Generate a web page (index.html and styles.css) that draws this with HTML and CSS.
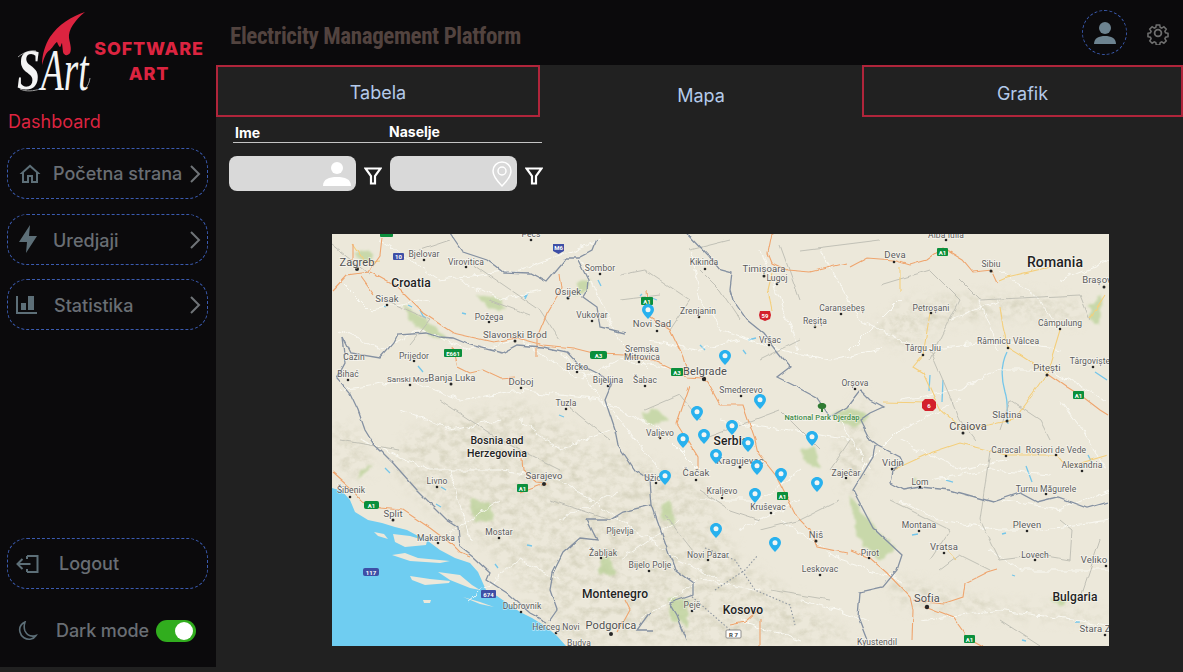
FILE: index.html
```html
<!DOCTYPE html>
<html lang="sr">
<head>
<meta charset="utf-8">
<title>Electricity Management Platform</title>
<link rel="stylesheet" href="styles.css">
</head>
<body>
<div class="app">
  <aside class="sidebar">
    <div class="brand">
      <svg class="brand-mark" viewBox="0 0 92 105" width="92" height="105" aria-label="SArt">
        <path class="flame" d="M85 12C72 16 58 25 50 37C45 45 42 55 42 65C44 58 46 52 50 50C53 47 55 43 57 42C58 44 59 47 60 47C61 47 61 44 62 43L63 52C64 56 68 56 70 53C72 49 70 44 69 38C68 30 75 20 85 12Z"/>
        <path class="swoosh" d="M18 57C24 52 31 50 36 51M20 89C26 92 34 91 40 89M90 78C89 84 87 87 84 90"/>
        <text class="logo-s" transform="translate(17 89) scale(.75 1)">S</text>
        <text class="logo-art" transform="translate(41 90) scale(.62 1)">Art</text>
      </svg>
      <div class="brand-name">SOFTWARE<br>ART</div>
    </div>
    <div class="section-title">Dashboard</div>
    <nav class="nav">
      <a class="nav-item">
        <svg class="nav-icon" viewBox="0 0 24 24"><path d="M12 5.200l6 5.400V19h-3v-6H9v6H6v-8.400l6-5.400M12 2.500L1.500 12H4v9h7v-6h2v6h7v-9h2.500L12 2.500z"/></svg>
        <span class="nav-label">Početna strana</span>
        <svg class="chev" viewBox="0 0 12 20"><path d="M2 2l8 8-8 8"/></svg>
      </a>
      <a class="nav-item">
        <svg class="nav-icon bolt" viewBox="0 0 18 28"><path d="M11 0L0 17h8L7 28 18 11H10z"/></svg>
        <span class="nav-label low">Uredjaji</span>
        <svg class="chev" viewBox="0 0 12 20"><path d="M2 2l8 8-8 8"/></svg>
      </a>
      <a class="nav-item">
        <svg class="nav-icon wide" viewBox="0 0 21 18"><path d="M0 0h2v16h19v2H0zM5 7h5v7H5zM12 0h6v14h-6z"/></svg>
        <span class="nav-label low">Statistika</span>
        <svg class="chev" viewBox="0 0 12 20"><path d="M2 2l8 8-8 8"/></svg>
      </a>
    </nav>
    <div class="side-bottom">
      <a class="nav-item logout">
        <svg class="nav-icon wide" viewBox="0 0 23 18"><path class="line" d="M11 1h10.500v16H11M11 1v3M11 17v-3M1.500 9h13M6.500 4l-5 5 5 5"/></svg>
        <span class="nav-label">Logout</span>
      </a>
      <div class="mode-row">
        <svg class="moon" viewBox="0 0 20 20"><path d="M7 1C3 3 1 7 2 11c1 5 6 8 11 7 2-.4 4-2 5-3.500-5 1.500-9-.5-11-4.500C6 7.500 6 4 7 1z"/></svg>
        <span class="mode-label">Dark mode</span>
        <span class="toggle"><span class="knob"></span></span>
      </div>
    </div>
  </aside>

  <div class="main">
    <header class="topbar">
      <h1 class="title">Electricity Management Platform</h1>
      <div class="top-actions">
        <span class="avatar">
          <svg viewBox="0 0 24 24" width="24" height="24"><circle cx="12" cy="7" r="6"/><path d="M1 23c0-6 5-8 11-8s11 2 11 8z"/></svg>
        </span>
        <svg class="gear" viewBox="0 0 24 24" width="24" height="24"><circle cx="12" cy="12" r="3.400"/><path d="M10 2.500h4l.6 2.900 1.800.8 2.500-1.600 2.800 2.800-1.600 2.500.8 1.800 2.900.6v4l-2.900.6-.8 1.800 1.600 2.500-2.800 2.800-2.500-1.600-1.800.8-.6 2.900h-4l-.6-2.900-1.800-.8-2.500 1.600-2.800-2.800 1.600-2.500-.8-1.800-2.900-.6v-4l2.900-.6.8-1.800-1.600-2.500 2.800-2.800 2.500 1.600 1.800-.8z" transform="translate(1.800 1.800) scale(.85)"/></svg>
      </div>
    </header>

    <div class="tabs">
      <div class="tab tab-boxed tab-first">Tabela</div>
      <div class="tab tab-active">Mapa</div>
      <div class="tab tab-boxed tab-last">Grafik</div>
    </div>

    <section class="filters">
      <div class="filter-head">
        <span class="col-name">Ime</span>
        <span class="col-place">Naselje</span>
      </div>
      <div class="filter-row">
        <div class="field">
          <svg viewBox="0 0 28 24" width="28" height="24"><circle cx="14" cy="6" r="6"/><path d="M0 24c0-7 6-9 14-9s14 2 14 9z"/></svg>
        </div>
        <svg class="funnel" viewBox="0 0 18 18" width="18" height="18"><path d="M1.500 1.500h15L11 9v7.500H7V9z"/></svg>
        <div class="field">
          <svg class="pin-outline" viewBox="0 0 20 26" width="20" height="26"><path d="M10 1C5 1 1 5 1 10c0 6 9 15 9 15s9-9 9-15c0-5-4-9-9-9z"/><circle cx="10" cy="10" r="4"/></svg>
        </div>
        <svg class="funnel" viewBox="0 0 18 18" width="18" height="18"><path d="M1.500 1.500h15L11 9v7.500H7V9z"/></svg>
      </div>
    </section>

    <div class="map-wrap">
      <svg class="map" viewBox="332 234 777 412" width="777" height="412">
        <defs>
          <filter id="blur3" x="-20%" y="-20%" width="140%" height="140%"><feGaussianBlur stdDeviation="7"/></filter>
          <filter id="wiggle" filterUnits="userSpaceOnUse" x="320" y="220" width="800" height="440">
            <feTurbulence type="fractalNoise" baseFrequency="0.09" numOctaves="3" seed="3" result="n"/>
            <feDisplacementMap in="SourceGraphic" in2="n" scale="9" xChannelSelector="R" yChannelSelector="G"/>
          </filter>
          <filter id="wiggle-soft" filterUnits="userSpaceOnUse" x="320" y="220" width="800" height="440">
            <feTurbulence type="fractalNoise" baseFrequency="0.07" numOctaves="2" seed="9" result="n"/>
            <feDisplacementMap in="SourceGraphic" in2="n" scale="4" xChannelSelector="R" yChannelSelector="G" result="d"/>
            <feGaussianBlur in="d" stdDeviation=".35"/>
          </filter>
          <filter id="parkedge" filterUnits="userSpaceOnUse" x="320" y="220" width="800" height="440">
            <feTurbulence type="fractalNoise" baseFrequency="0.12" numOctaves="3" seed="5" result="n"/>
            <feDisplacementMap in="SourceGraphic" in2="n" scale="7" xChannelSelector="R" yChannelSelector="G" result="d"/>
            <feGaussianBlur in="d" stdDeviation=".8"/>
          </filter>
          <filter id="hills" x="0" y="0" width="100%" height="100%">
            <feTurbulence type="fractalNoise" baseFrequency="0.1 0.13" numOctaves="4" seed="7"/>
            <feColorMatrix type="matrix" values="0 0 0 0 .62  0 0 0 0 .60  0 0 0 0 .46  1.500 1.500 0 0 -1.250"/>
          </filter>
          <mask id="mountains">
            <g fill="#fff" filter="url(#blur3)">
              <path d="M410 430L520 400 600 445 700 480 740 560 800 600 860 640 560 646 500 560 430 510 390 470z"/>
              <path d="M870 330L905 300 960 295 1040 295 1085 305 1080 322 1010 318 950 322 900 350z"/>
              <path d="M332 420L360 430 375 470 340 480z"/>
              <path d="M885 575L950 590 1000 603 1109 612 1109 622 1000 616 940 610 895 606z"/>
              <path d="M862 390L872 470 850 505 835 450z"/>
            </g>
          </mask>
          <symbol id="pin" viewBox="0 0 12 15">
            <path class="pin-body" d="M6 0C2.700 0 0 2.600 0 5.800 0 9.500 6 15 6 15s6-5.500 6-9.200C12 2.600 9.300 0 6 0z"/>
            <circle class="pin-hole" cx="6" cy="5.800" r="2.500"/>
          </symbol>
        </defs>

        <rect class="land" x="332" y="234" width="777" height="412"/>
        <rect x="332" y="234" width="777" height="412" filter="url(#hills)" mask="url(#mountains)" opacity=".7"/>

        <g class="park" filter="url(#parkedge)">
          <path d="M476 294L500 299 506 310 488 308z"/>
          <path d="M402 304L425 318 447 340 430 336 410 320z"/>
          <path d="M352 255L364 250 374 256 366 262z"/>
          <path d="M578 283L590 278 588 292 575 296z"/>
          <path d="M470 497L490 505 495 520 475 522 472 510z"/>
          <path d="M360 470L372 465 358 482z"/>
          <path d="M600 560L610 555 615 575 600 575z"/>
          <path d="M830 415L852 408 870 416 855 428z"/>
          <path d="M800 450L815 448 822 470 806 462z"/>
          <path d="M850 495L868 520 896 548 880 562 856 535z"/>
          <path d="M668 597L690 600 688 625 670 620z"/>
          <path d="M1090 305L1102 295 1100 325 1090 320z"/>
          <path d="M640 412L655 410 670 420 650 425z"/>
          <path d="M660 505L672 500 675 525 662 520z"/>
          <path d="M1050 598L1070 600 1060 606z"/>
          <path d="M912 478L916 478 914 486z"/>
        </g>

        <path class="sea" d="M332 488L342 491 350 500 355 512 368 520 382 523 395 527 407 530 418 536 428 541 440 550 455 558 470 563 478 572 486 590 497 596 507 603 520 612 532 618 545 626 557 636 566 646H332z"/>
        <g class="isle">
          <path d="M374 532L384 534 388 539 378 536z"/>
          <path d="M393 534L410 536 427 541 426 545 405 547 395 542z"/>
          <path d="M392 555L405 553 418 558 450 561 440 563 410 561z"/>
          <path d="M410 576L430 579 450 581 449 583 425 585 412 580z"/>
          <path d="M438 572L460 575 472 585 480 590 470 588 450 580z"/>
          <path d="M463 597L480 602 494 607 480 604z"/>
          <path d="M423 600L431 600 430 603 424 603z"/>
        </g>

        <g class="water-in">
          <path d="M420 310l3 6 3 2M408 305l4 2M383 306l3 1M462 313l4 1M524 297l3-2-2 4M559 415l5 2M418 366l5 6M441 487l5 3M436 504l5 3M385 468l5 5M495 564l3 4M527 545l5 1M598 280l3 6M652 298l5 2M700 345l5 5M743 350l3 4M640 296l2-2M1007 352c-6 12-6 26 -2 40 4 12 1 20 3 32M1095 372l12 8M930 375l-1 16M943 380l-1 22M1026 466l6 16M1088 455l4 8M912 535l6-1M1002 534l4-1M1012 575l3 1M1075 622l5 0M1022 640l4 1M946 480l7 2M748 340l8-2"/>
        </g>
        <g class="minor" filter="url(#wiggle)">
          <path d="M340 330L380 350 420 330 470 350 520 340 580 380 620 360 680 370M340 390L410 380 460 400 520 390 600 400 660 430 700 470M360 440L430 470 500 470 560 480 620 520 680 560 720 580M450 470L470 540M580 260L600 300 620 340 650 370M690 250L700 300 720 330 780 350 830 360 880 350M760 250L780 300 800 350M820 250L860 320 920 350 1000 340 1060 350M900 400L960 390 1000 370 1050 370 1105 400M900 440L960 470 1010 460M900 500L940 520 1000 530 1040 530 1109 520M990 550L1020 570 1109 570M840 420L870 470M780 520L840 560 900 580M640 620L700 580 760 590M920 620L1000 610 1109 625M380 240L440 280 520 270 600 240M340 280L370 310 430 300M560 350L620 420 660 470M1000 270L1040 300 1060 330M980 300L1000 350M1060 400L1090 440 1105 470M460 280L500 300 540 290M400 410L450 430 500 420M520 420L560 450 610 430M650 340L700 350 740 340M720 420L790 430 850 440M700 500L760 500 800 470M740 530L800 500M620 560L680 520M560 520L620 490M440 540L500 500M470 600L520 560 560 580M930 480L990 470 1050 475M1000 500L1060 510 1109 490M860 470L900 430 960 400M950 320L1000 300M1060 280L1109 260M850 350L900 300M800 600L870 620M740 620L800 640"/>
        </g>
        <g class="subborder" filter="url(#wiggle-soft)">
          <path d="M332 245L370 275M420 250L450 240M470 262L540 310 560 340M385 300L430 320 410 345M490 300L530 315M620 275L645 270 690 300 670 330M700 270L720 290 740 320M780 245L800 300M800 250L880 240M880 285L930 270 960 300 930 360M980 300L1080 295 1090 320M960 280L980 300M1000 430L1010 400 1040 420 1050 440M930 350L960 420 975 440M990 450L980 520 1000 560 1040 555 1070 560 1072 530 1060 520M1100 540L1080 600M940 570L960 555 990 570M700 490L730 510 760 520M665 515L700 560M700 440L780 410 820 450M840 500L800 520 760 530M440 400L500 440 560 470M560 400L610 440M550 500L610 520M340 440L400 450M890 500L950 530 930 560M1000 620L1040 646M645 410L680 395 700 420M620 300L660 295M690 250L730 240M760 360L800 340M830 470L850 440M770 590L830 600"/>
        </g>
        <g class="yellow" filter="url(#wiggle-soft)">
          <path d="M1000 280L1007 277 1050 267M1000 307L1003 327 1008 348 1023 357 1047 373 1060 330M1047 373L1033 393 1013 420 963 430 940 410 923 373 913 367 923 355 930 313M900 292L900 267M928 403L883 402M893 470L930 453 960 443 1007 455 1057 455 1067 467 1108 455M772 273L768 290 772 310M945 548L956 560M1105 295L1090 318M352 243L365 262 380 260"/>
        </g>
        <g class="highway" filter="url(#wiggle-soft)">
          <path d="M333 290L347 275 368 272 380 255 382 237M353 243L353 260M360 277L373 295M370 272L397 287 423 313 453 333 493 342 517 338 543 345 573 348 597 354 625 355 657 362 688 377 702 378 708 383 720 405 743 405 755 440 758 453 777 477 787 497 797 517 810 530 817 547 847 553M647 290L650 317 670 330 683 357 688 375M677 423L690 385M677 423L698 457 698 470M560 273L562 288 547 313 537 337 537 357M453 347L458 367 470 373 483 370 500 378 515 377M332 472L350 488 363 502 380 508 403 510 430 528 450 543 460 553 470 557M522 458L523 470 537 482 547 483 520 493M850 267L867 258 893 260 910 265 927 260 943 248 963 260 973 272 992 270 998 283M772 233L768 253 772 263 787 270 810 272 847 263M1047 373L1067 387 1083 397 1100 410 1108 415M850 550L870 558 887 573 910 597 913 610 912 640M913 600L945 603 963 597 965 583 987 572 997 569M925 606L953 617 967 637 983 646M625 600L630 610 618 632M730 625L745 622 758 610M760 620L760 646"/>
        </g>
        <g class="border" filter="url(#wiggle-soft)">
          <path d="M450 233L463 252 487 260 503 272 530 273 547 282 563 263 567 258 578 258 593 250 597 240M578 260L588 280 587 290 583 297 597 307 600 327 625 333"/>
          <path d="M342 337L350 353 380 358 393 343 397 335 427 333 440 337 453 338 470 345 502 353 517 345 543 347 567 352 577 363 597 373 612 383 605 400 615 430 618 445 635 470 650 480 652 505 623 512 610 520 587 520"/>
          <path d="M342 337L345 363 337 378 350 393 358 410 365 430 373 443 393 463 417 490 447 520 458 527 460 547 473 557 490 573 487 580 507 593 530 613 547 622"/>
          <path d="M587 520L597 540 580 538 563 553 553 573 550 590 557 610 550 620M652 505L675 570 693 583 693 595 670 603 677 615 687 640M650 612L637 630 653 630"/>
          <path d="M687 233L708 255 720 270 732 273 730 290 733 300 747 320 763 333 790 367 777 377 793 385 817 398 830 417 847 407 860 390 870 400 883 407 870 413 860 420 870 440 877 445 900 457 903 463 892 470 890 483 903 490 920 487 950 490 993 502 1020 493 1037 502 1057 497 1087 508 1108 502"/>
          <path d="M875 445L873 457 853 490 873 528 902 555 897 570 883 587 860 592 858 617 867 640"/>
        </g>
        <path class="dotted" d="M705 548L735 560 755 590 790 605 795 625M730 630L690 595M715 590L745 570 758 555"/>

        <g class="dots">
          <circle cx="357" cy="269" r="2"/><circle cx="424" cy="260" r="1.300"/><circle cx="466" cy="267" r="1.300"/><circle cx="531" cy="240" r="1.300"/><circle cx="600" cy="274" r="1.300"/><circle cx="568" cy="298" r="1.500"/><circle cx="387" cy="305" r="1.300"/><circle cx="489" cy="322" r="1.300"/><circle cx="592" cy="321" r="1.300"/><circle cx="515" cy="341" r="1.500"/><circle cx="414" cy="361" r="1.300"/><circle cx="348" cy="380" r="1.300"/><circle cx="410" cy="385" r="1.300"/><circle cx="451" cy="384" r="1.500"/><circle cx="521" cy="388" r="1.300"/><circle cx="577" cy="372" r="1.300"/><circle cx="608" cy="386" r="1.300"/><circle cx="566" cy="409" r="1.300"/><circle cx="544" cy="484" r="2"/><circle cx="350" cy="497" r="1.300"/><circle cx="437" cy="487" r="1.300"/><circle cx="393" cy="520" r="1.500"/><circle cx="499" cy="538" r="1.300"/><circle cx="438" cy="543" r="1.300"/><circle cx="521" cy="612" r="1.300"/><circle cx="556" cy="633" r="1.300"/><circle cx="611" cy="634" r="2"/><circle cx="649" cy="571" r="1.300"/><circle cx="601" cy="558" r="1.300"/><circle cx="708" cy="560" r="1.300"/><circle cx="820" cy="575" r="1.300"/><circle cx="692" cy="611" r="1.300"/><circle cx="816" cy="541" r="1.500"/><circle cx="771" cy="513" r="1.300"/><circle cx="722" cy="498" r="1.300"/><circle cx="696" cy="480" r="1.300"/><circle cx="656" cy="483" r="1.300"/><circle cx="660" cy="438" r="1.300"/><circle cx="740" cy="467" r="1.500"/><circle cx="645" cy="386" r="1.300"/><circle cx="639" cy="362" r="1.300"/><circle cx="657" cy="331" r="1.300"/><circle cx="699" cy="317" r="1.300"/><circle cx="705" cy="269" r="1.300"/><circle cx="764" cy="276" r="1.500"/><circle cx="777" cy="284" r="1.300"/><circle cx="841" cy="314" r="1.300"/><circle cx="815" cy="327" r="1.300"/><circle cx="769" cy="345" r="1.300"/><circle cx="704" cy="379" r="2.200"/><circle cx="741" cy="396" r="1.300"/><circle cx="855" cy="389" r="1.300"/><circle cx="846" cy="478" r="1.300"/><circle cx="892" cy="469" r="1.300"/><circle cx="920" cy="487" r="1.300"/><circle cx="919" cy="531" r="1.300"/><circle cx="944" cy="553" r="1.300"/><circle cx="869" cy="558" r="1.300"/><circle cx="927" cy="607" r="2.200"/><circle cx="1027" cy="531" r="1.300"/><circle cx="1035" cy="560" r="1.300"/><circle cx="1106" cy="566" r="1.300"/><circle cx="1105" cy="635" r="1.300"/><circle cx="1082" cy="471" r="1.300"/><circle cx="1056" cy="455" r="1.300"/><circle cx="1006" cy="456" r="1.300"/><circle cx="1046" cy="494" r="1.300"/><circle cx="963" cy="433" r="1.500"/><circle cx="1007" cy="421" r="1.500"/><circle cx="1047" cy="375" r="1.500"/><circle cx="1093" cy="367" r="1.300"/><circle cx="1060" cy="329" r="1.300"/><circle cx="1008" cy="348" r="1.300"/><circle cx="923" cy="355" r="1.300"/><circle cx="931" cy="313" r="1.300"/><circle cx="894" cy="262" r="1.300"/><circle cx="946" cy="240" r="1.300"/><circle cx="991" cy="271" r="1.500"/><circle cx="1104" cy="287" r="1.500"/>
        </g>

        <g class="label">
          <text x="357" y="266" class="l-big">Zagreb</text><text x="424" y="257">Bjelovar</text><text x="466" y="265">Virovitica</text><text x="531" y="237">Pecs</text><text x="600" y="271">Sombor</text><text x="568" y="295" class="l-mid">Osijek</text><text x="387" y="302" class="l-mid">Sisak</text><text x="489" y="320">Požega</text><text x="592" y="318">Vukovar</text><text x="515" y="338" class="l-mid">Slavonski Brod</text><text x="354" y="360">Cazin</text><text x="414" y="359">Prijedor</text><text x="348" y="377">Bihać</text><text x="409" y="382" class="l-small">Sanski Most</text><text x="452" y="381" class="l-mid">Banja Luka</text><text x="521" y="385" class="l-mid">Doboj</text><text x="577" y="370">Brčko</text><text x="608" y="383">Bijeljina</text><text x="566" y="406">Tuzla</text><text x="544" y="479" class="l-mid">Sarajevo</text><text x="351" y="493">Šibenik</text><text x="437" y="484">Livno</text><text x="393" y="517" class="l-mid">Split</text><text x="499" y="535">Mostar</text><text x="436" y="541">Makarska</text><text x="522" y="609">Dubrovnik</text><text x="556" y="630">Herceg Novi</text><text x="579" y="646">Budva</text><text x="611" y="629" class="l-big">Podgorica</text><text x="620" y="534">Pljevlja</text><text x="603" y="556">Žabljak</text><text x="650" y="568">Bijelo Polje</text><text x="708" y="558">Novi Pazar</text><text x="820" y="572">Leskovac</text><text x="692" y="608">Pejë</text><text x="816" y="538" class="l-mid">Niš</text><text x="768" y="510">Kruševac</text><text x="722" y="494">Kraljevo</text><text x="696" y="476" class="l-mid">Čačak</text><text x="655" y="481">Užice</text><text x="660" y="436">Valjevo</text><text x="740" y="464" class="l-mid">Kragujevac</text><text x="645" y="383">Šabac</text><text x="642" y="352">Sremska</text><text x="642" y="360">Mitrovica</text><text x="652" y="327" class="l-mid">Novi Sad</text><text x="698" y="314">Zrenjanin</text><text x="704" y="265">Kikinda</text><text x="764" y="272" class="l-mid">Timișoara</text><text x="777" y="281">Lugoj</text><text x="842" y="311">Caransebeș</text><text x="815" y="324">Reșița</text><text x="770" y="343">Vršac</text><text x="705" y="375" class="l-big">Belgrade</text><text x="741" y="393">Smederevo</text><text x="855" y="386">Orșova</text><text x="846" y="476">Zaječar</text><text x="893" y="466" class="l-mid">Vidin</text><text x="920" y="485">Lom</text><text x="919" y="528">Montana</text><text x="944" y="550" class="l-mid">Vratsa</text><text x="870" y="556">Pirot</text><text x="927" y="602" class="l-big">Sofia</text><text x="1027" y="528" class="l-mid">Pleven</text><text x="1035" y="558">Lovech</text><text x="1098" y="563" class="l-mid">Veliko T</text><text x="1095" y="632" class="l-mid">Stara Z</text><text x="1082" y="468">Alexandria</text><text x="1056" y="453">Roșiori de Vede</text><text x="1006" y="453">Caracal</text><text x="1046" y="492">Turnu Măgurele</text><text x="968" y="430" class="l-big">Craiova</text><text x="1007" y="418" class="l-mid">Slatina</text><text x="1047" y="371" class="l-mid">Pitești</text><text x="1090" y="364">Târgoviște</text><text x="1060" y="326">Câmpulung</text><text x="1008" y="344">Râmnicu Vâlcea</text><text x="923" y="351">Târgu Jiu</text><text x="931" y="311">Petroșani</text><text x="895" y="258" class="l-mid">Deva</text><text x="946" y="238">Alba Iulia</text><text x="991" y="267">Sibiu</text><text x="1097" y="283" class="l-mid">Brașov</text><text x="877" y="645">Kyustendil</text>
          <text x="411" y="287" class="l-country">Croatia</text><text x="497" y="444" class="l-country small">Bosnia and</text><text x="497" y="457" class="l-country small">Herzegovina</text><text x="615" y="598" class="l-country">Montenegro</text><text x="743" y="614" class="l-country">Kosovo</text><text x="731" y="445" class="l-country">Serbia</text><text x="1055" y="267" class="l-country large">Romania</text><text x="1075" y="601" class="l-country">Bulgaria</text>
          <text x="822" y="420" class="l-park">National Park Djerdap</text>
        </g>
        <path class="tree" d="M822 403c3 0 5 2 4 4 0 1-2 2-3 2v3h-2v-3c-1 0-3-1-3-2-1-2 1-4 4-4z"/>

        <g class="shield-text">
          <rect class="sh-green" x="380" y="232" width="13" height="5" rx="1"/>
          <rect class="sh-blue" x="393" y="253" width="11" height="7" rx="1"/><text x="398.500" y="259">10</text>
          <path class="sh-blue" d="M553 244h11v7l-5.500 3-5.500-3z"/><text x="558.500" y="250">M6</text>
          <rect class="sh-green" x="444" y="349" width="18" height="8" rx="1"/><text x="453" y="356">E661</text>
          <rect class="sh-green" x="590" y="351" width="17" height="8" rx="2"/><text x="598.500" y="358">A3</text>
          <rect class="sh-green" x="641" y="297" width="12" height="8" rx="1"/><text x="647" y="304">A1</text>
          <rect class="sh-green" x="671" y="368" width="12" height="8" rx="1"/><text x="677" y="375">A3</text>
          <rect class="sh-green" x="777" y="492" width="11" height="8" rx="1"/><text x="782.500" y="499">A1</text>
          <rect class="sh-green" x="517" y="484" width="11" height="8" rx="1"/><text x="522.500" y="491">A1</text>
          <rect class="sh-green" x="364" y="501" width="15" height="8" rx="2"/><text x="371.500" y="508">A1</text>
          <rect class="sh-blue" x="363" y="568" width="16" height="8" rx="2"/><text x="371" y="575">117</text>
          <rect class="sh-blue" x="481" y="590" width="15" height="8" rx="1"/><text x="488.500" y="597">674</text>
          <rect class="sh-green" x="937" y="248" width="11" height="8" rx="1"/><text x="942.500" y="255">A1</text>
          <rect class="sh-green" x="1073" y="391" width="11" height="8" rx="1"/><text x="1078.500" y="398">A1</text>
          <rect class="sh-green" x="964" y="635" width="11" height="8" rx="1"/><text x="969.500" y="642">A1</text>
          <path class="sh-red" d="M760 311h10l1 4-1 4-5 2-5-2-1-4z"/><text x="765" y="318">59</text>
          <path class="sh-red" d="M925 399h8l3 3v6l-3 3h-8l-3-3v-6z"/><text x="929" y="408">6</text>
          <rect class="sh-white" x="726" y="630" width="15" height="8" rx="1"/><text class="dark" x="733.500" y="637">R 7</text>
        </g>

        <use href="#pin" x="642" y="304" width="12" height="15"/><use href="#pin" x="719" y="350" width="12" height="15"/><use href="#pin" x="754" y="394" width="12" height="15"/><use href="#pin" x="691" y="406" width="12" height="15"/><use href="#pin" x="726" y="420" width="12" height="15"/><use href="#pin" x="698" y="429" width="12" height="15"/><use href="#pin" x="677" y="433" width="12" height="15"/><use href="#pin" x="742" y="437" width="12" height="15"/><use href="#pin" x="710" y="449" width="12" height="15"/><use href="#pin" x="751" y="460" width="12" height="15"/><use href="#pin" x="775" y="468" width="12" height="15"/><use href="#pin" x="659" y="470" width="12" height="15"/><use href="#pin" x="811" y="477" width="12" height="15"/><use href="#pin" x="749" y="488" width="12" height="15"/><use href="#pin" x="710" y="523" width="12" height="15"/><use href="#pin" x="769" y="537" width="12" height="15"/><use href="#pin" x="806" y="431" width="12" height="15"/>
      </svg>
    </div>
  </div>
</div>
</body>
</html>
```

FILE: styles.css
```css
* { box-sizing: border-box; }
html, body { margin: 0; height: 100%; }
body {
  background: #212121;
  font-family: Inter, "Noto Sans", sans-serif;
  overflow: hidden;
}
.app { display: flex; width: 1183px; height: 672px; }

/* sidebar */
.sidebar {
  width: 216px;
  height: 667px;
  background: #0b0a0c;
  display: flex;
  flex-direction: column;
  flex: none;
}
.brand { display: flex; height: 109px; }
.brand-mark { flex: none; }
.flame { fill: #dc2440; }
.swoosh { fill: none; stroke: #9a9a9a; stroke-width: 1; }
.logo-s { font: italic 700 56px "Liberation Serif", serif; fill: #f4f4f4; }
.logo-art { font: italic 400 60px "Liberation Serif", serif; fill: #f4f4f4; }
.brand-name {
  margin: 36px 0 0 2px;
  width: 110px;
  color: #dc2440;
  font: 800 18px/25px Inter, sans-serif;
  letter-spacing: .8px;
  text-align: center;
  white-space: nowrap;
}
.section-title {
  color: #dc2440;
  font-size: 18px;
  line-height: 26px;
  padding-left: 8px;
}
.nav { display: flex; flex-direction: column; gap: 14.500px; margin-top: 13px; padding-left: 7px; }
.nav-item {
  position: relative;
  display: flex;
  align-items: center;
  width: 201px;
  height: 51px;
  border: 1px dashed #3b5bb0;
  border-radius: 20px;
  color: #696e74;
}
.nav-icon { width: 24px; height: 24px; margin-left: 10px; fill: #5d6f78; flex: none; }
.nav-icon.bolt { width: 18px; height: 28px; margin-left: 11px; margin-right: 5px; }
.nav-icon.wide { width: 21px; height: 18px; margin-left: 8px; }
.nav-label { margin-left: 11px; font-size: 18px; font-weight: 500; white-space: nowrap; }
.nav-label.low { padding-top: 2px; }
.wide + .nav-label { margin-left: 17px; }
.chev { position: absolute; right: 6px; top: 15px; width: 12px; height: 20px; fill: none; stroke: #707478; stroke-width: 2; }
.side-bottom { margin-top: auto; padding-left: 7px; padding-bottom: 25px; }
.logout { width: 201px; }
.logout .nav-icon { width: 23px; height: 18px; margin-left: 8px; fill: none; }
.logout .nav-label { margin-left: 20px; }
.line { fill: none; stroke: #5d6f78; stroke-width: 2; }
.mode-row { display: flex; align-items: center; margin-top: 30px; height: 23px; }
.moon { width: 20px; height: 20px; margin-left: 11px; fill: none; stroke: #5d6f78; stroke-width: 1.600; flex: none; }
.mode-label { margin-left: 18px; font-size: 18px; font-weight: 500; letter-spacing: -.1px; color: #696e74; white-space: nowrap; }
.toggle { width: 40px; height: 22px; margin-left: 7px; border-radius: 11px; background: #31ad1e; display: flex; align-items: center; justify-content: flex-end; padding-right: 3px; flex: none; }
.knob { width: 18px; height: 18px; border-radius: 50%; background: #fff; }

/* main */
.main { flex: 1; min-width: 0; display: flex; flex-direction: column; }
.topbar {
  height: 65px;
  background: #0b0a0c;
  display: flex;
  align-items: center;
  justify-content: space-between;
  padding: 0 13px 0 14px;
  flex: none;
}
.title {
  margin: 7px 0 0;
  font: 700 23px Roboto, sans-serif;
  font-stretch: 75%;
  color: #52433f;
  letter-spacing: -.4px;
  white-space: nowrap;
}
.top-actions { display: flex; align-items: center; gap: 19px; }
.avatar {
  width: 45px;
  height: 45px;
  border: 1px dashed #3b5bb0;
  border-radius: 50%;
  display: flex;
  align-items: center;
  justify-content: center;
}
.avatar svg { fill: #6d8390; }
.gear { fill: none; stroke: #6f6f6f; stroke-width: 1.800; }

.tabs { display: grid; grid-template-columns: 324px 322px 321px; height: 52px; flex: none; }
.tab { display: flex; align-items: center; justify-content: center; color: #b4caea; font-size: 18px; }
.tab-boxed { border: 2px solid #b0253b; }
.tab-first { padding-top: 2px; }
.tab-active { padding-top: 8px; }
.tab-last { padding-top: 4px; }

.filters { padding: 6px 0 0 13px; flex: none; }
.filter-head {
  display: flex;
  width: 309px;
  height: 20px;
  margin-left: 4px;
  border-bottom: 1px solid #c4c4c4;
  color: #fff;
  font-size: 14px;
  font-weight: 700;
}
.col-name { width: 156px; padding: 1px 0 0 2px; }
.filter-row { display: flex; align-items: center; margin-top: 13px; }
.field {
  width: 127px;
  height: 35px;
  border-radius: 8px;
  background: #d9d9d9;
  display: flex;
  align-items: center;
  justify-content: flex-end;
  padding-right: 5px;
}
.field svg { fill: #fff; }
.field .pin-outline { fill: none; stroke: #fff; stroke-width: 1.500; }
.funnel { fill: none; stroke: #fff; stroke-width: 2.200; margin: 4px 8px 0 8px; flex: none; }

.map-wrap { padding: 43px 0 0 116px; flex: none; }
.map { display: block; overflow: hidden; }
.land { fill: #ece8da; }
.park { fill: #bcd39a; opacity: .75; }
.sea { fill: #6fcdf1; }
.isle { fill: #ece8da; }
.water-in { fill: none; stroke: #74c6ea; stroke-width: 1.300; }
.minor { fill: none; stroke: #fbfaf5; stroke-width: .9; }
.yellow { fill: none; stroke: #f4cf7c; stroke-width: 1.100; }
.highway { fill: none; stroke: #efa56e; stroke-width: 1.100; }
.border { fill: none; stroke: #8591a2; stroke-width: 1.300; }
.subborder { fill: none; stroke: #bcbcb2; stroke-width: .9; }
.dotted { fill: none; stroke: #8f97a0; stroke-width: 1.100; stroke-dasharray: 1.500 2; }
.dots { fill: #262626; }
.label text {
  font: 400 8.500px Roboto, sans-serif;
  fill: #5b5b5b;
  text-anchor: middle;
  letter-spacing: .1px;
  paint-order: stroke;
  stroke: rgba(255, 255, 255, .55);
  stroke-width: 1.500px;
}
.label .l-small { font-size: 8px; letter-spacing: 0; }
.label .l-mid { font-size: 9.500px; }
.label .l-big { font-size: 11px; fill: #505050; }
.label .l-country { font-size: 12px; font-weight: 500; fill: #222; }
.label .l-country.small { font-size: 10.500px; }
.label .l-country.large { font-size: 14px; }
.label .l-park { font-size: 7.500px; fill: #3f8a46; font-weight: 500; }
.tree { fill: #2f7a32; }
.shield-text text { font: 700 6px Roboto, sans-serif; fill: #fff; text-anchor: middle; }
.shield-text .dark { fill: #444; }
.sh-green { fill: #0b8f3c; }
.sh-blue { fill: #3e4fa6; }
.sh-red { fill: #d3202c; }
.sh-white { fill: #fff; stroke: #777; stroke-width: .8; }
.pin-body { fill: #28b1ee; }
.pin-hole { fill: #f3f6f4; }
```
